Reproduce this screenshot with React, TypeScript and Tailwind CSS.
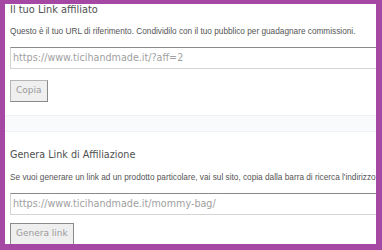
import React from "react";

const dj = "font-['DejaVu_Sans',Verdana,sans-serif]";
const narrow = "font-['Liberation_Sans_Narrow','Liberation_Sans',Arial,sans-serif]";

function Field({ text, className }: { text: string; className: string }) {
  return (
    <div
      className={`${className} w-[380px] h-[22px] border border-[#d4d4d4] border-t-[#8a8a8a] flex items-center pl-[2px] text-[9.6px] text-[#a0a0a0] whitespace-nowrap font-['DejaVu_Sans',Verdana,sans-serif]`}
    >
      {text}
    </div>
  );
}

export default function App() {
  return (
    <div className="w-[382px] h-[250px] bg-[#a448a3] pl-[5px] pt-[4px] pr-[6px] pb-[6px]">
      <div className="h-full bg-white overflow-hidden flex flex-col">
        <div className="pl-[5px] flex flex-col items-start">
          <div className={`${dj} text-[9.8px] leading-[12px] text-[#505050] whitespace-nowrap`}>
            Il tuo Link affiliato
          </div>
          <div className={`${narrow} mt-[11px] text-[8.25px] leading-[10px] text-[#555] whitespace-nowrap`}>
            Questo è il tuo URL di riferimento. Condividilo con il tuo pubblico per guadagnare commissioni.
          </div>
          <Field className="mt-[10px]" text="https://www.ticihandmade.it/?aff=2" />
          <div className={`${dj} mt-[11px] h-[22px] px-[5px] bg-[#efefef] border border-[#b5b5b5] border-r-[#8a8a8a] border-b-[#8a8a8a] flex items-center text-[9px] text-[#9a9a9a]`}>
            Copia
          </div>
        </div>
        <div className="mt-[13px] h-[17px] bg-[#f9fafc] border-y border-[#eef1f5] shrink-0" />
        <div className="pl-[5px] flex flex-col items-start">
          <div className={`${dj} mt-[17px] text-[9.6px] leading-[12px] text-[#505050] whitespace-nowrap`}>
            Genera Link di Affiliazione
          </div>
          <div className={`${narrow} mt-[12px] text-[8.25px] leading-[10px] text-[#555] whitespace-nowrap`}>
            Se vuoi generare un link ad un prodotto particolare, vai sul sito, copia dalla barra di ricerca l'indirizzo
          </div>
          <Field className="mt-[10px]" text="https://www.ticihandmade.it/mommy-bag/" />
          <div className={`${dj} mt-[8px] h-[22px] px-[5px] bg-[#efefef] border border-[#8a8a8a] flex items-center text-[9px] text-[#9a9a9a] shrink-0`}>
            Genera link
          </div>
        </div>
      </div>
    </div>
  );
}
